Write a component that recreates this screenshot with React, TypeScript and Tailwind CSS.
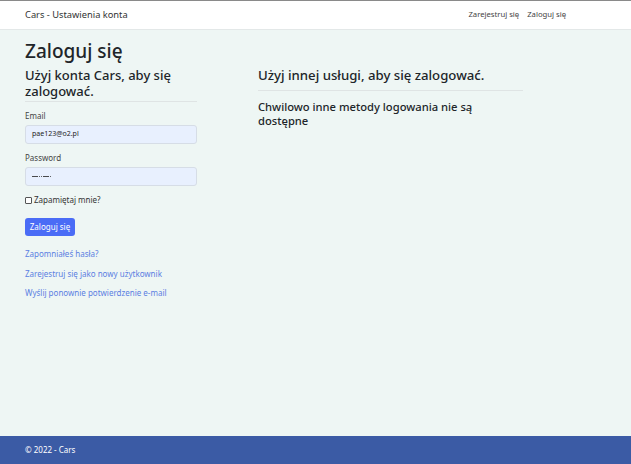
import React from "react";

export default function App() {
  const font = { fontFamily: "'Noto Sans', 'Open Sans', sans-serif" };
  return (
    <div className="w-[631px] h-[464px] flex flex-col bg-[#eef6f4] text-[#212529] overflow-hidden" style={font}>
      <div className="h-px bg-[#8a8a8a]" />
      <header className="h-[29px] bg-white border-b border-[#e3e8e8] flex items-center justify-between pl-[25px] pr-[65px]">
        <span className="text-[9.3px] text-[#333]">Cars - Ustawienia konta</span>
        <nav className="flex gap-[8px] text-[7.7px] text-[#444]">
          <span>Zarejestruj się</span>
          <span>Zaloguj się</span>
        </nav>
      </header>
      <main className="flex-1 flex pl-[25px] pt-[9px]">
        <section className="w-[172px]">
          <h1 className="text-[19px] leading-[24px] font-medium">Zaloguj się</h1>
          <h2 className="text-[13px] leading-[16px] font-medium mt-[4px]">Użyj konta Cars, aby się zalogować.</h2>
          <div className="h-px bg-[#dfe4e4] mt-[2px]" />
          <label className="block text-[8px] leading-[12px] text-[#444] mt-[8px]">Email</label>
          <div className="mt-[3px] h-[19px] rounded-[3px] border border-[#d6dde6] bg-[#e8f0fe] flex items-center px-[6px] text-[7px] text-[#222]">pae123@o2.pl</div>
          <label className="block text-[8px] leading-[12px] text-[#444] mt-[8px]">Password</label>
          <div className="mt-[3px] h-[19px] rounded-[3px] border border-[#d6dde6] bg-[#e8f0fe] flex items-center px-[6px] gap-[0.6px]">
            {Array.from({ length: 9 }).map((_, i) => (
              <span key={i} className="w-[1.6px] h-[1.6px] rounded-full bg-[#333]" />
            ))}
          </div>
          <div className="flex items-center mt-[8px] gap-[2px] h-[12px]">
            <span className="w-[7px] h-[7px] border border-[#555] rounded-[1px] bg-white" />
            <span className="text-[8px] text-[#333]">Zapamiętaj mnie?</span>
          </div>
          <div className="mt-[12px] w-[50px] h-[18px] rounded-[3px] bg-[#4a6cf6] text-white text-[8px] flex items-center justify-center">Zaloguj się</div>
          <div className="mt-[12px] flex flex-col gap-[7.5px] text-[8px] text-[#5b7fe2] leading-[12px]">
            <span>Zapomniałeś hasła?</span>
            <span>Zarejestruj się jako nowy użytkownik</span>
            <span>Wyślij ponownie potwierdzenie e-mail</span>
          </div>
        </section>
        <section className="ml-[61px] w-[265px] pt-[27px]">
          <h2 className="text-[13.2px] leading-[18px] font-medium">Użyj innej usługi, aby się zalogować.</h2>
          <div className="h-px bg-[#dfe4e4] mt-[6px]" />
          <h3 className="text-[11.2px] leading-[14px] font-medium mt-[9px] w-[230px]">Chwilowo inne metody logowania nie są dostępne</h3>
        </section>
      </main>
      <footer className="h-[28px] bg-[#3b5ba5] flex items-center pl-[25px] text-[8px] text-white">© 2022 - Cars</footer>
    </div>
  );
}
